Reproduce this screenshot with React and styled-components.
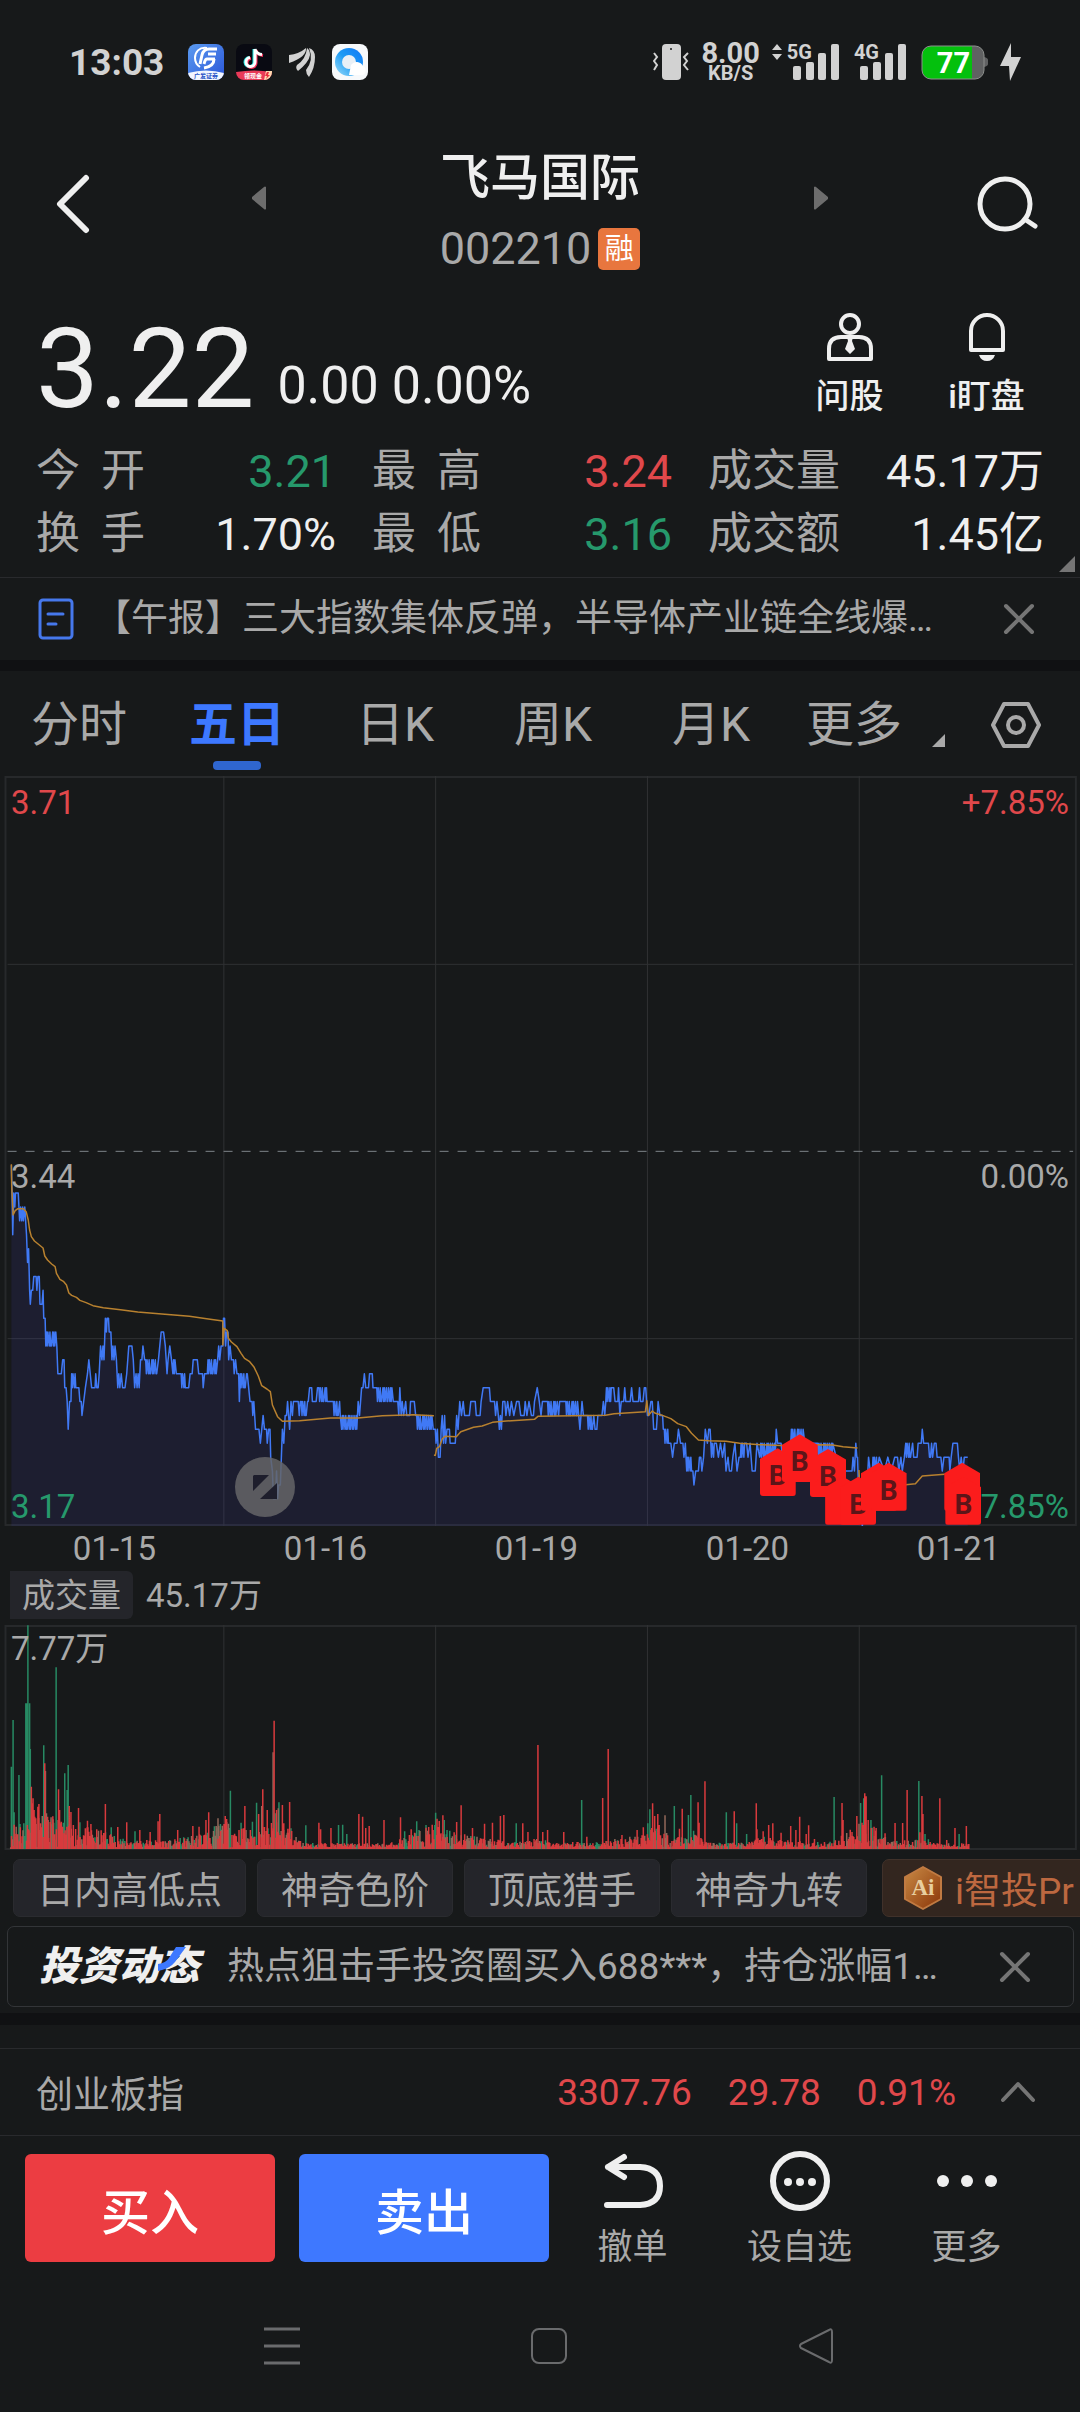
import { useState } from "react";
import styled, { createGlobalStyle, css } from "styled-components";

const RED = "#e0484b";
const GREEN = "#26996c";
const LIGHT = "#efefef";
const GRAY = "#a9a9a9";
const LINE = "#292a2d";

const stats = [
    { label: ["今", "开"], value: "3.21", color: GREEN },
    { label: ["最", "高"], value: "3.24", color: RED },
    { label: ["成", "交", "量"], value: "45.17万", color: LIGHT },
    { label: ["换", "手"], value: "1.70%", color: LIGHT },
    { label: ["最", "低"], value: "3.16", color: GREEN },
    { label: ["成", "交", "额"], value: "1.45亿", color: LIGHT },
];

const tabs = ["分时", "五日", "日K", "周K", "月K"];
const dates = ["01-15", "01-16", "01-19", "01-20", "01-21"];
const chips = ["日内高低点", "神奇色阶", "顶底猎手", "神奇九转"];

// [x, cents below 3.44], or [from, to, high, low] where the price flips between two levels
const priceLeft = [
    [33, 1], [35, 3], [37, 6], [40, 3], [43, 4], [45, 3], [53, 3], [57, 5], [60, 4], [63, 5], [66, 4], [68, 5], [72, 4], [77, 6], [80, 8], [83, 7],
    [86, 10], [88, 11], [91, 10], [95, 10], [98, 9], [105, 9], [107, 10], [110, 9], [114, 9], [116, 11], [122, 11], [125, 10], [127, 12], [131, 12],
    [133, 14], [135, 160, 13, 14], [162, 13], [165, 14], [168, 16], [178, 16], [182, 15], [186, 15], [188, 17], [192, 17], [195, 18], [198, 20],
    [202, 18], [206, 18], [208, 224, 16, 17], [229, 17], [232, 18], [236, 18], [238, 19], [243, 18], [248, 17], [254, 16], [258, 15], [262, 16],
    [266, 17], [276, 17], [278, 16], [281, 17], [285, 17], [288, 16], [292, 14], [296, 15], [299, 14], [302, 15], [306, 12], [309, 13], [311, 12],
    [315, 12], [317, 13], [322, 13], [325, 15], [328, 14], [331, 15], [334, 14], [338, 15], [342, 17], [345, 16], [348, 17], [352, 16], [356, 17],
    [363, 17], [368, 16], [374, 14], [383, 14], [387, 15], [391, 17], [395, 16], [398, 17], [401, 16], [404, 17], [408, 15], [412, 15], [415, 14],
    [420, 15], [423, 456, 15, 16], [460, 15], [464, 14], [468, 13], [475, 13], [480, 14], [485, 16], [488, 15], [493, 14], [498, 15], [502, 16],
    [504, 512, 15, 16], [514, 16], [524, 16], [526, 540, 16, 17], [548, 17], [552, 16], [558, 16], [561, 15], [573, 15], [577, 16], [588, 16],
    [590, 17], [594, 16], [602, 16], [604, 632, 15, 16], [635, 14], [638, 15], [642, 14], [647, 14], [649, 12], [652, 12], [655, 14], [658, 13],
    [662, 13], [664, 15], [668, 14], [672, 15], [678, 15], [680, 16], [684, 15], [688, 16], [693, 16], [695, 18], [698, 716, 16, 17], [718, 16],
    [722, 17], [726, 18], [732, 18], [734, 19], [737, 18], [742, 20], [752, 20], [756, 21], [760, 20], [764, 19], [768, 20], [774, 20], [776, 21],
    [780, 20], [784, 20], [786, 22], [791, 23], [794, 25], [800, 25], [803, 23], [806, 25], [809, 24], [814, 24], [817, 22], [820, 20], [824, 21],
    [828, 19], [832, 19], [835, 18], [838, 19], [841, 20], [845, 18], [849, 19], [852, 18], [866, 18], [869, 19], [872, 18], [875, 893, 18, 19],
    [895, 18], [899, 17], [905, 17], [907, 18], [918, 18], [922, 17], [926, 952, 17, 18], [955, 18], [966, 18], [968, 988, 18, 19], [992, 20],
    [994, 1036, 19, 20], [1040, 18], [1044, 19], [1050, 17], [1054, 17], [1058, 16], [1062, 17], [1070, 17], [1073, 16], [1081, 16], [1083, 17],
    [1092, 17], [1094, 1142, 17, 18], [1155, 18], [1158, 19], [1161, 17], [1165, 19], [1168, 18], [1172, 19], [1178, 18], [1181, 19], [1190, 19],
    [1192, 18], [1203, 18], [1207, 19], [1210, 1260, 19, 20], [1264, 20], [1266, 21], [1270, 20], [1273, 22], [1278, 22], [1281, 20], [1284, 19],
    [1288, 21], [1291, 19], [1294, 21], [1298, 20], [1305, 20], [1307, 21], [1322, 21], [1326, 19], [1330, 20], [1335, 18], [1340, 19], [1345, 18],
    [1349, 19], [1363, 19], [1367, 18], [1380, 18], [1383, 19], [1394, 19], [1397, 18], [1403, 17], [1421, 17], [1424, 18], [1436, 18], [1439, 19],
    [1443, 18], [1447, 19], [1450, 20], [1453, 19], [1456, 20], [1460, 18], [1466, 18], [1469, 19], [1474, 18], [1480, 19], [1485, 18], [1492, 19],
    [1500, 18], [1507, 18], [1512, 19], [1522, 19], [1525, 18], [1530, 19], [1536, 18], [1543, 19], [1549, 19], [1552, 18], [1560, 17], [1566, 18],
];

const priceRight = [
    [3, 19], [7, 18], [20, 18], [22, 50, 18, 19], [54, 19], [57, 18], [72, 18], [75, 112, 18, 19], [116, 20], [119, 19], [122, 18], [126, 19],
    [135, 19], [138, 152, 19, 20], [156, 19], [160, 20], [165, 20], [168, 19], [180, 19], [184, 18], [188, 19], [191, 18], [193, 205, 17, 18],
    [207, 17], [214, 17], [218, 18], [226, 18], [228, 17], [232, 19], [236, 18], [243, 18], [246, 17], [249, 18], [262, 18], [266, 17], [270, 18],
    [286, 18], [289, 17], [292, 18], [299, 18], [303, 17], [307, 17], [312, 19], [316, 19], [322, 18], [326, 18], [330, 20], [338, 20], [343, 18],
    [348, 19], [356, 19], [358, 20], [361, 378, 20, 21], [380, 21], [385, 22], [390, 21], [398, 21], [402, 20], [408, 21], [415, 21], [418, 22],
    [422, 21], [426, 23], [428, 440, 22, 23], [444, 23], [447, 24], [452, 23], [460, 23], [463, 22], [467, 22], [470, 23], [475, 22], [480, 20],
    [486, 21], [490, 20], [494, 20], [496, 506, 21, 22], [512, 21], [518, 22], [524, 21], [530, 22], [536, 21], [540, 23], [546, 22], [550, 23],
    [556, 23], [560, 22], [566, 21], [572, 23], [578, 22], [582, 22], [584, 594, 21, 22], [600, 21], [604, 22], [610, 21], [616, 23], [625, 23],
    [630, 21], [638, 22], [641, 684, 21, 22], [686, 20], [690, 21], [700, 21], [704, 22], [726, 22], [730, 766, 20, 21], [769, 21], [804, 21],
    [806, 850, 21, 22], [860, 22], [888, 23], [900, 23], [906, 23], [909, 22], [913, 23], [917, 21], [920, 22], [922, 22], [926, 25], [931, 25],
    [936, 27], [942, 24], [950, 24], [954, 22], [959, 23], [965, 23], [967, 980, 22, 23], [985, 22], [1000, 23], [1010, 22], [1020, 23],
    [1030, 22], [1038, 22], [1042, 23], [1048, 22], [1052, 23], [1058, 22], [1062, 1078, 21, 22], [1082, 21], [1085, 22], [1095, 22], [1098, 21],
    [1107, 21], [1110, 20], [1114, 21], [1128, 21], [1131, 22], [1134, 22], [1137, 21], [1140, 22], [1145, 21], [1150, 21], [1153, 22], [1164, 22],
    [1168, 23], [1173, 22], [1188, 22], [1190, 23], [1194, 22], [1199, 21], [1212, 21], [1215, 22], [1219, 23], [1223, 22], [1228, 23], [1232, 22], [1242, 22],
];

const averageLines = [
    "33,133 34,200 38,285 44,272 52,266 68,266 76,275 82,300 86,330 91,350 100,363 125,384 130,408 138,420 150,432 160,440 164,460 174,478 184,484 193,495 200,519 208,526 222,532 232,541 250,548 270,557 300,563 350,569 400,576 470,582 550,589 600,596 647,603 647,675 651,625 660,632 663,655 672,666 688,680 700,700 710,715 725,725 738,742 750,768 760,797 775,807 785,815 791,855 806,890 820,904 870,902 960,894 1040,894 1110,887 1200,884 1260,887",
    "1260,1006 1264,1006 1268,985 1276,980 1284,957 1292,949 1325,950 1338,935 1375,922 1400,918 1430,907 1470,903 1552,898 1562,889 1568,889 1758,886 1783,881 1874,875 1878,842 1883,886 1894,873 1903,880 1918,884 1948,896 1968,911 1993,920 2008,940 2028,960 2058,962 2108,964 2148,970 2208,974 2288,977 2374,974 2418,975 2448,980 2490,984",
    "2494,1050 2496,1085 2510,1110 2560,1100 2630,1094 2658,1091 2678,1068 2743,1063",
];

// volume spikes: x,y and g (down) / r (up) / m (both)
const spikesLeft = "33,740g 38,600g 41,877g 47,920m 55,765g 58,912g 75,550g 78,550g 81,316g 86,550g 88,687g 91,800r 93,850r 96,835r 99,870r 101,890r 104,895r 110,860r 113,852r 118,910r 127,676g 130,730r 132,753m 135,880m 140,900m 148,898m 154,898m 163,442g 170,808r 173,870r 178,905r 182,920r 188,760g 195,810g 198,735g 201,858r 206,876r 213,915r 228,864r 232,907g 254,902r 264,912r 306,852r 323,922g 342,921r 368,907r 392,934g 406,930r 436,936r 459,904r 464,882r 516,930r 560,918r 578,920r 598,900r 606,877r 633,895m 640,912g 654,888r 658,897r 669,812g 700,908g 711,858r 733,905g 745,848g 751,882r 763,808r 760,858m 776,870r 793,697m 796,602r 799,880g 803,870r 808,865m 810,847g 820,855r 824,910r 836,926r 841,846r 845,925g 888,916g 926,908r 931,928r 961,924r 983,915g 995,914g 1007,942g 1042,882r 1053,890r 1062,924r 1072,918r 1115,900r 1163,892r 1175,934g 1194,928r 1210,904g 1237,915g 1255,914r 1265,878g 1269,896r 1286,886r 1290,900g 1298,930g 1326,906r 1339,856r 1372,924r 1407,911r 1430,908r 1453,888r 1463,885r 1499,910g 1518,910r 1533,936r 1562,675r";
const spikesRight = "8,936r 22,930r 69,936r 121,840g 136,950r 182,834r 198,687r 238,945r 282,930r 300,922r 313,910g 319,868g 327,850r 333,888r 342,882r 346,915r 363,886m 390,858g 405,926r 413,866r 431,885g 438,825g 446,932g 459,847r 462,908r 479,784r 541,877g 564,874r 571,910g 600,942g 628,850r 630,928r 648,934r 664,915r 676,910r 700,938r 728,918r 743,930r 754,890r 773,942r 780,916r 797,957r 826,966r 854,831g 877,849r 880,900r 906,936r 920,888r 931,849g 935,908r 940,835g 943,820r 947,829r 953,900r 961,900g 970,920r 976,924r 992,766g 1002,940r 1031,909r 1053,909r 1066,810r 1100,783g 1103,937r 1109,828r 1112,882r 1118,942g 1161,835r 1181,960r 1205,924r 1217,942g 1238,918r";

// how high the quiet minutes reach: [x, height]
const envelope = [
    [30, 75], [110, 100], [150, 95], [200, 70], [260, 60], [310, 50], [360, 25], [500, 22], [600, 50], [650, 80], [740, 50], [800, 80], [850, 50],
    [880, 14], [1130, 12], [1200, 45], [1280, 85], [1330, 45], [1430, 28], [1480, 14], [1568, 28], [1600, 14], [1730, 18], [1800, 28], [1860, 48],
    [1900, 70], [1930, 50], [1980, 35], [2030, 48], [2050, 16], [2160, 14], [2220, 34], [2290, 22], [2400, 14], [2450, 38], [2500, 95], [2540, 60],
    [2580, 22], [2650, 24], [2700, 24], [2760, 12], [2814, 12],
];

const markers = [
    { x: 638, y: 985 }, { x: 784, y: 987 }, { x: 702, y: 943 }, { x: 828, y: 1070, blank: true }, { x: 872, y: 1070 },
    { x: 932, y: 1028, blank: true }, { x: 960, y: 1028 }, { x: 1174, y: 1028, blank: true }, { x: 1177, y: 1070 },
];

const VIEW_WIDTH = 3136;
const HALF = 1568;
const BASE = 1218;
const dayLines = [650, 1265, 1880, 2495];

function levelToY(level) {
    return 94 + level * 41.7;
}

function expand(series, offset) {
    const points = [];
    series.forEach(item => {
        if (item.length === 2) {
            points.push([item[0] + offset, levelToY(item[1])]);
            return;
        }
        const [from, to, high, low] = item;
        let up = true;
        let step = 0;
        for (let x = from; x <= to; x += step % 4 === 3 ? 4 : 2) {
            points.push([x + offset, levelToY(up ? high : low)]);
            if (step % 7 !== 5) up = !up;
            step++;
        }
    });
    return points;
}

function parseSpikes(text, offset) {
    return text.split(" ").map(item => {
        const [x, y] = item.slice(0, -1).split(",").map(Number);
        return { x: x + offset, top: y, kind: item.slice(-1) };
    });
}

function quietBars() {
    const bars = [];
    let seed = 11;
    for (let x = 31; x < 2815; x += 2.55) {
        seed = (seed * 16807) % 2147483647;
        const random = seed / 2147483647;
        const next = Math.max(1, envelope.findIndex(point => point[0] > x));
        const [x0, h0] = envelope[next - 1];
        const [x1, h1] = envelope[next];
        const height = h0 + ((h1 - h0) * (x - x0)) / (x1 - x0);
        const kind = seed % 10 < 6 ? "r" : seed % 10 < 8 ? "m" : "g";
        bars.push({ x, top: 987 - 5 - height * random, kind });
    }
    return bars;
}

const pricePoints = [...expand(priceLeft, 0), ...expand(priceRight, HALF)];
const priceLine = pricePoints.map(point => point.join(",")).join(" ");
const priceArea = `33,${BASE} ${priceLine} 2810,${BASE}`;
const volumeBars = [...quietBars(), ...parseSpikes(spikesLeft, 0), ...parseSpikes(spikesRight, HALF)];

function barsPath(kind) {
    return volumeBars.filter(bar => bar.kind === kind).map(bar => `M${bar.x.toFixed(1)} 987V${bar.top.toFixed(0)}`).join("");
}

function CloseIcon() {
    return (
        <svg width="32" height="32" viewBox="0 0 32 32" fill="none" stroke="#757575" strokeWidth="4" strokeLinecap="round">
            <path d="M3 3L29 29M29 3L3 29" />
        </svg>
    );
}

function SignalIcon() {
    return (
        <svg width="46" height="36" viewBox="0 0 46 36" fill="#d2d2d2">
            <rect x="0" y="22" width="8" height="14" rx="2" />
            <rect x="13" y="18" width="8" height="18" rx="2" />
            <rect x="25" y="9" width="8" height="27" rx="2" />
            <rect x="38" y="0" width="8" height="36" rx="2" />
        </svg>
    );
}

function StatusBar() {
    return (
        <Status>
            <StatusGroup>
                <Clock>13:03</Clock>
                <svg width="36" height="36" viewBox="0 0 36 36">
                    <defs>
                        <linearGradient id="gf" x1="0" y1="0" x2="1" y2="1">
                            <stop offset="0" stopColor="#5b9bf0" />
                            <stop offset="1" stopColor="#2a55d8" />
                        </linearGradient>
                        <clipPath id="tile"><rect width="36" height="36" rx="8" /></clipPath>
                    </defs>
                    <g clipPath="url(#tile)">
                        <rect width="36" height="36" fill="url(#gf)" />
                        <path d="M19 4C11 3 7 8 7 14c0 4 2 7 5 9" fill="none" stroke="#fff" strokeWidth="2" />
                        <path d="M29 5H21c-4 0-6 2-7 6l-2 9M28 10H20M27 15H19c-2 0-2 2-3 5M26 15c0 5-4 8-10 9" fill="none" stroke="#fff" strokeWidth="3" />
                        <path d="M0 29Q18 24 36 29V36H0z" fill="#f3f6ff" />
                        <text x="18" y="34" textAnchor="middle" fontSize="6" fontWeight="700" fill="#2b55c8">广发证券</text>
                    </g>
                </svg>
                <svg width="36" height="36" viewBox="0 0 36 36">
                    <g clipPath="url(#tile)">
                        <rect width="36" height="36" fill="#090a12" />
                        <g fill="none" strokeWidth="3">
                            <path d="M18 5V18a4.500 4.500 0 1 1-5-4.500M18 5c1 4 3 5 7 5.500" stroke="#25e8e4" />
                            <path d="M20 6V19a4.500 4.500 0 1 1-5-4.500M20 6c1 4 3 5 7 5.500" stroke="#f5305a" />
                            <path d="M19 5V18a4.500 4.500 0 1 1-5-4.500M19 5c1 4 3 5 7 5.500" stroke="#fff" />
                        </g>
                        <path d="M0 28Q18 25 36 28V36H0z" fill="#e83a58" />
                        <path d="M30 27h6v9h-8z" fill="#ffd9b0" />
                        <path d="M31 28l-2 4h2l-1 3 4-4h-2l1-3z" fill="#e8303f" />
                        <text x="17" y="34" textAnchor="middle" fontSize="6" fontWeight="700" fill="#fff">领现金</text>
                    </g>
                </svg>
                <svg width="36" height="36" viewBox="0 0 36 36" fill="#d2d2d2">
                    <path d="M5 11Q15 10 22 4Q23 13 5 19z" />
                    <path d="M23 4Q26 6 26 11Q25 18 14 27Q11 24 13 21Q22 15 23 4z" />
                    <path d="M25 4Q31 6 31 13Q31 24 25 33Q22 30 22 26Q30 16 25 4z" />
                </svg>
                <svg width="36" height="36" viewBox="0 0 36 36">
                    <defs>
                        <linearGradient id="qb" x1="0" y1="1" x2="1" y2="0">
                            <stop offset="0" stopColor="#9adcf8" />
                            <stop offset="0.500" stopColor="#1c9bf5" />
                            <stop offset="1" stopColor="#1277f5" />
                        </linearGradient>
                    </defs>
                    <rect width="36" height="36" rx="8" fill="#f7f9fb" />
                    <circle cx="17" cy="18" r="14" fill="url(#qb)" />
                    <circle cx="17" cy="18" r="7" fill="#e9f0f6" />
                    <path d="M17 31h14a5 5 0 0 0 0-9 7 7 0 0 0-12-1z" fill="#fff" />
                </svg>
            </StatusGroup>
            <StatusGroup>
                <svg width="36" height="36" viewBox="0 0 36 36">
                    <rect x="9" width="19" height="36" rx="4" fill="#d2d2d2" />
                    <circle cx="18" cy="5" r="1" fill="#17191a" />
                    <path d="M1 9l3 4-3 4 3 4-3 5M35 9l-4 4 3 4-3 4 4 5" fill="none" stroke="#d2d2d2" strokeWidth="2" />
                </svg>
                <Speed>
                    <b>8.00</b>
                    <small>KB/S</small>
                </Speed>
                <Network>
                    <svg width="10" height="16" viewBox="0 0 10 16" fill="#d2d2d2">
                        <path d="M5 0l5 6H0zM5 16l5-6H0z" />
                    </svg>
                    <NetworkName>5G</NetworkName>
                    <SignalIcon />
                </Network>
                <Network>
                    <NetworkName>4G</NetworkName>
                    <SignalIcon />
                </Network>
                <Battery>
                    <svg width="67" height="36" viewBox="0 0 67 36">
                        <rect x="1" y="2" width="62" height="33" rx="9" fill="#606162" />
                        <path d="M63 13q4 1 4 3v4q0 2-4 3z" fill="#606162" />
                        <path d="M10 2H51V35H10a9 9 0 0 1-9-9V11a9 9 0 0 1 9-9z" fill="#04c00d" />
                        <rect x="1" y="2" width="62" height="33" rx="9" fill="none" stroke="#8d908d" strokeWidth="1" />
                    </svg>
                    <span>77</span>
                </Battery>
                <svg width="21" height="38" viewBox="0 0 21 38" fill="#d2d2d2">
                    <path d="M11 0L0 23H9L10 38 21 14H11z" />
                </svg>
            </StatusGroup>
        </Status>
    );
}

function PriceChart() {
    return (
        <ChartBox>
            <svg width="100%" height="750" viewBox={`0 -1032 ${VIEW_WIDTH} 2250`} preserveAspectRatio="none">
                <Grid d="M16 -1029H3124V1215H16z" $frame />
                <Grid d={dayLines.map(x => `M${x} -1032V${BASE}`).join("")} />
                <Grid d="M22 -467H3116M22 656H3116" />
                <Dashed d="M22 94H3116" />
                <Area points={priceArea} />
                <PriceLine points={priceLine} />
                {averageLines.map(points => <AverageLine key={points} points={points} />)}
            </svg>
            <AxisLabel $top={9} $color={RED}>3.71</AxisLabel>
            <AxisLabel $top={9} $color={RED} $right>+7.85%</AxisLabel>
            <AxisLabel $top={383} $color={GRAY}>3.44</AxisLabel>
            <AxisLabel $top={383} $color={GRAY} $right>0.00%</AxisLabel>
            <AxisLabel $top={713} $color={GREEN}>3.17</AxisLabel>
            <AxisLabel $top={713} $color={GREEN} $right>-7.85%</AxisLabel>
            {markers.map(marker => (
                <Marker
                    key={`${marker.x}-${marker.y}`}
                    style={{ left: `${((marker.x + HALF) / VIEW_WIDTH) * 100}%`, top: `${((marker.y + 1032) / 2250) * 100}%` }}
                >
                    {!marker.blank && "B"}
                </Marker>
            ))}
            <ExpandButton aria-label="全屏">
                <svg width="26" height="26" viewBox="0 0 26 26" fill="#1e1e2c">
                    <path d="M2 1H17L1 17V2zM25 9V25H8z" />
                </svg>
            </ExpandButton>
        </ChartBox>
    );
}

function VolumeChart() {
    return (
        <ChartBox>
            <svg width="100%" height="225" viewBox={`0 315 ${VIEW_WIDTH} 675`} preserveAspectRatio="none">
                <Grid d="M16 318H3124V987H16z" $frame />
                <Grid d={dayLines.map(x => `M${x} 315V987`).join("")} />
                <Bars d={barsPath("g")} stroke="#278a63" />
                <Bars d={barsPath("m")} stroke="#92685a" />
                <Bars d={barsPath("r")} stroke="#d83a3d" />
            </svg>
            <AxisLabel $top={6} $color={GRAY}>7.77万</AxisLabel>
        </ChartBox>
    );
}

export default function App() {
    const [activeTab, setActiveTab] = useState("五日");

    return (
        <Page>
            <GlobalStyle />
            <StatusBar />

            <Header>
                <IconButton aria-label="返回">
                    <svg width="34" height="60" viewBox="0 0 34 60" fill="none" stroke={LIGHT} strokeWidth="6" strokeLinecap="round" strokeLinejoin="round">
                        <path d="M30 4L4 30 30 56" />
                    </svg>
                </IconButton>
                <Switcher>
                    <StepButton aria-label="上一只">
                        <svg width="14" height="24" viewBox="0 0 14 24" fill="#6d6d6d"><path d="M14 1V23Q13 24 12 23L0 13V11L12 1Q13 0 14 1z" /></svg>
                    </StepButton>
                    <Title>
                        <Name>飞马国际</Name>
                        <Code>002210<Badge>融</Badge></Code>
                    </Title>
                    <StepButton aria-label="下一只">
                        <svg width="14" height="24" viewBox="0 0 14 24" fill="#6d6d6d"><path d="M0 1V23Q1 24 2 23L14 13V11L2 1Q1 0 0 1z" /></svg>
                    </StepButton>
                </Switcher>
                <IconButton aria-label="搜索">
                    <svg width="62" height="56" viewBox="0 0 62 56" fill="none" stroke={LIGHT} strokeWidth="5" strokeLinecap="round">
                        <circle cx="28" cy="28" r="25" />
                        <path d="M49 44L58 50" />
                    </svg>
                </IconButton>
            </Header>

            <Quote>
                <Price>3.22</Price>
                <Change>0.00 0.00%</Change>
                <Tools>
                    <Tool>
                        <svg width="48" height="48" viewBox="0 0 48 48" fill="none" stroke={LIGHT} strokeWidth="4">
                            <circle cx="24" cy="11" r="9" />
                            <path d="M3 46V36Q3 24 15 24H33Q45 24 45 36V46z" strokeLinejoin="round" />
                            <path d="M21 24H27L26 28 29 36 24 41 19 36 22 28z" fill={LIGHT} stroke="none" />
                        </svg>
                        问股
                    </Tool>
                    <Tool>
                        <svg width="48" height="48" viewBox="0 0 48 48" fill="none" stroke={LIGHT} strokeWidth="4">
                            <path d="M8 37V18a16 16 0 0 1 32 0V37z" strokeLinejoin="round" />
                            <path d="M16 42H32Q30 48 24 48T16 42z" fill={LIGHT} stroke="none" />
                        </svg>
                        i盯盘
                    </Tool>
                </Tools>
            </Quote>

            <Stats>
                {stats.map(stat => (
                    <Stat key={stat.label.join("")}>
                        <StatLabel $spread={stat.label.length === 2}>
                            {stat.label.map(char => <span key={char}>{char}</span>)}
                        </StatLabel>
                        <StatValue $color={stat.color}>{stat.value}</StatValue>
                    </Stat>
                ))}
                <Corner width="16" height="16" viewBox="0 0 16 16" fill="#757575"><path d="M16 0V16H0z" /></Corner>
            </Stats>

            <News>
                <svg width="36" height="42" viewBox="0 0 36 42" fill="none" stroke="#4678ec" strokeWidth="3" strokeLinecap="round">
                    <rect x="2" y="2" width="32" height="38" rx="3" />
                    <path d="M10 16H25M10 26H18" />
                </svg>
                <NewsText href="#news">【午报】三大指数集体反弹，半导体产业链全线爆…</NewsText>
                <CloseButton aria-label="关闭"><CloseIcon /></CloseButton>
            </News>
            <Band $height={11} />

            <Tabs>
                {tabs.map(tab => (
                    <Tab key={tab} $active={tab === activeTab} onClick={() => setActiveTab(tab)}>{tab}</Tab>
                ))}
                <MoreTab>
                    更多
                    <svg width="13" height="13" viewBox="0 0 13 13" fill={GRAY}><path d="M13 0V13H0z" /></svg>
                </MoreTab>
                <SettingsButton aria-label="设置">
                    <svg width="52" height="48" viewBox="0 0 52 48" fill="none" stroke={GRAY} strokeWidth="4" strokeLinejoin="round">
                        <path d="M14 3H38L49 24 38 45H14L3 24z" />
                        <circle cx="26" cy="24" r="8" />
                    </svg>
                </SettingsButton>
            </Tabs>

            <PriceChart />
            <Dates>
                {dates.map(date => <span key={date}>{date}</span>)}
            </Dates>

            <VolumeHead>
                <VolumeTag>成交量</VolumeTag>
                <VolumeTotal>45.17万</VolumeTotal>
            </VolumeHead>
            <VolumeChart />

            <Chips>
                {chips.map(chip => <Chip key={chip}>{chip}</Chip>)}
                <ProChip>
                    <svg width="38" height="44" viewBox="0 0 38 44">
                        <defs>
                            <linearGradient id="ai" x1="0" y1="0" x2="1" y2="1">
                                <stop offset="0" stopColor="#c98a45" />
                                <stop offset="1" stopColor="#8a3508" />
                            </linearGradient>
                        </defs>
                        <path d="M19 1L37 11V33L19 43 1 33V11z" fill="url(#ai)" stroke="#c07a42" strokeWidth="2" strokeLinejoin="round" />
                        <text x="19" y="29" textAnchor="middle" fontFamily="Liberation Serif, serif" fontWeight="700" fontSize="23" fill="#e8cf9f">Ai</text>
                    </svg>
                    i智投Pr
                </ProChip>
            </Chips>

            <Feed>
                <FeedLogo>
                    投资动态
                    <svg width="30" height="26" viewBox="0 0 30 26" fill="#3d78ff"><path d="M19 1H29L18 16Q13 22 5 24L1 25V18Q9 17 12 12z" /></svg>
                </FeedLogo>
                <NewsText href="#feed">热点狙击手投资圈买入688***，持仓涨幅1…</NewsText>
                <CloseButton aria-label="关闭"><CloseIcon /></CloseButton>
            </Feed>
            <Band $height={12} />

            <IndexBar>
                <IndexName>创业板指</IndexName>
                <span>3307.76</span>
                <span>29.78</span>
                <span>0.91%</span>
                <IndexToggle aria-label="展开">
                    <svg width="36" height="22" viewBox="0 0 36 22" fill="none" stroke="#757575" strokeWidth="4" strokeLinecap="round" strokeLinejoin="round">
                        <path d="M3 19L18 3 33 19" />
                    </svg>
                </IndexToggle>
            </IndexBar>

            <Actions>
                <TradeButton $color="#ec3d42">买入</TradeButton>
                <TradeButton $color="#3e78ff">卖出</TradeButton>
                <ActionList>
                    <Action>
                        <svg width="62" height="62" viewBox="0 0 62 62" fill="none" stroke={LIGHT} strokeWidth="6" strokeLinecap="round" strokeLinejoin="round">
                            <path d="M22 7L6 17 22 27M6 17H38Q58 18 58 36T38 55H5" />
                        </svg>
                        撤单
                    </Action>
                    <Action>
                        <svg width="62" height="62" viewBox="0 0 62 62" fill={LIGHT}>
                            <circle cx="31" cy="31" r="27" fill="none" stroke={LIGHT} strokeWidth="6" />
                            <circle cx="19" cy="32" r="4" />
                            <circle cx="31" cy="32" r="4" />
                            <circle cx="43" cy="32" r="4" />
                        </svg>
                        设自选
                    </Action>
                    <Action>
                        <svg width="62" height="62" viewBox="0 0 62 62" fill={LIGHT}>
                            <circle cx="7" cy="31" r="6" />
                            <circle cx="31" cy="31" r="6" />
                            <circle cx="55" cy="31" r="6" />
                        </svg>
                        更多
                    </Action>
                </ActionList>
            </Actions>

            <SystemNav>
                <SystemButton aria-label="任务">
                    <svg width="36" height="38" viewBox="0 0 36 38" stroke="#6a6b6d" strokeWidth="3"><path d="M0 2H36M0 19H36M0 36H36" /></svg>
                </SystemButton>
                <SystemButton aria-label="主页">
                    <svg width="36" height="38" viewBox="0 0 36 38" fill="none" stroke="#6a6b6d" strokeWidth="2"><rect x="1" y="2" width="34" height="34" rx="7" /></svg>
                </SystemButton>
                <SystemButton aria-label="后退">
                    <svg width="36" height="38" viewBox="0 0 36 38" fill="none" stroke="#6a6b6d" strokeWidth="2" strokeLinejoin="round"><path d="M31 3Q34 1 34 5V33Q34 37 31 35L3 21Q1 19 3 17z" /></svg>
                </SystemButton>
            </SystemNav>
        </Page>
    );
}

const GlobalStyle = createGlobalStyle`
    * {
        box-sizing: border-box;
    }

    body {
        margin: 0;
        background-color: #17191a;
        font-family: Roboto, "Noto Sans CJK SC", sans-serif;
        color: ${GRAY};
    }

    button {
        padding: 0;
        border: none;
        background: none;
        color: inherit;
        font-family: inherit;
        font-size: inherit;
        cursor: pointer;
    }

    svg {
        display: block;
        flex-shrink: 0;
    }
`;

const Page = styled.main`
    overflow: hidden;
`;

const Status = styled.div`
    height: 124px;
    padding: 0 59px 0 69px;

    display: flex;
    justify-content: space-between;
    align-items: center;

    color: #d2d2d2;
`;

const StatusGroup = styled.div`
    display: flex;
    align-items: center;
    gap: 12px;
`;

const Clock = styled.span`
    margin-right: 12px;

    font-size: 37px;
    font-weight: 700;
`;

const Speed = styled.div`
    display: flex;
    flex-direction: column;
    align-items: center;

    b {
        font-size: 29px;
        line-height: 22px;
    }

    small {
        font-size: 20px;
        font-weight: 700;
        line-height: 18px;
    }
`;

const Network = styled.div`
    margin-right: 3px;

    display: flex;
    align-items: flex-start;

    > svg:first-child {
        margin-right: 5px;
    }

    > svg:last-child {
        margin-left: -19px;
    }
`;

const NetworkName = styled.span`
    font-size: 20px;
    font-weight: 700;
    line-height: 17px;
`;

const Battery = styled.div`
    position: relative;

    span {
        position: absolute;
        inset: 2px 2px 0 0;

        font-size: 29px;
        font-weight: 700;
        line-height: 34px;
        text-align: center;
        color: #ffffff;
    }
`;

const Header = styled.header`
    padding: 20px 41px 0 56px;

    display: flex;
    align-items: flex-start;
`;

const IconButton = styled.button`
    width: 62px;
    height: 120px;
`;

const Switcher = styled.div`
    flex: 1;
    padding: 0 144px 0 129px;

    display: flex;
    align-items: flex-start;
    justify-content: space-between;
`;

const StepButton = styled.button`
    width: 24px;
    height: 108px;

    svg {
        margin: 0 auto;
    }
`;

const Title = styled.div`
    text-align: center;
`;

const Name = styled.h1`
    margin: 0;

    font-size: 50px;
    font-weight: 500;
    line-height: 68px;
    color: ${LIGHT};
`;

const Code = styled.div`
    display: flex;
    align-items: center;
    justify-content: center;
    gap: 7px;

    font-size: 45px;
    line-height: 74px;
`;

const Badge = styled.span`
    width: 42px;
    height: 42px;
    border-radius: 5px;
    background-color: #e8763e;

    font-size: 29px;
    line-height: 42px;
    text-align: center;
    color: #ffffff;
`;

const Quote = styled.section`
    padding: 27px 25px 0 36px;

    display: flex;
    align-items: flex-end;

    color: ${LIGHT};
`;

const Price = styled.strong`
    font-size: 112px;
    font-weight: 400;
    line-height: 112px;
`;

const Change = styled.span`
    margin-left: 23px;
    padding-bottom: 9px;

    font-size: 52px;
    line-height: 60px;
`;

const Tools = styled.div`
    margin-left: auto;
    align-self: flex-start;

    display: flex;
`;

const Tool = styled.button`
    width: 137px;

    display: flex;
    flex-direction: column;
    align-items: center;
    gap: 13px;

    font-size: 34px;
    font-weight: 500;
    line-height: 44px;
`;

const Stats = styled.dl`
    margin: 0;
    padding: 15px 36px 11px;
    border-bottom: 1px solid ${LINE};
    position: relative;

    display: grid;
    grid-template-columns: 300fr 300fr 336fr;
    column-gap: 36px;
`;

const Stat = styled.div`
    display: flex;
    justify-content: space-between;

    font-size: 45px;
    line-height: 63px;
`;

const StatLabel = styled.dt`
    display: flex;
    gap: ${props => props.$spread ? '21px' : '0'};

    font-size: 44px;
`;

const StatValue = styled.dd`
    margin: 0;

    color: ${props => props.$color};
`;

const Corner = styled.svg`
    position: absolute;
    right: 5px;
    bottom: 5px;
`;

const News = styled.section`
    height: 82px;
    padding: 0 45px 0 38px;

    display: flex;
    align-items: center;
`;

const NewsText = styled.a`
    flex: 1;
    margin-left: 20px;
    overflow: hidden;

    font-size: 37px;
    line-height: 50px;
    white-space: nowrap;
    text-decoration: none;
    color: inherit;
`;

const CloseButton = styled.button`
    margin-left: 20px;
`;

const Band = styled.div`
    height: ${props => props.$height}px;
    background-color: #101113;
`;

const Tabs = styled.nav`
    height: 105px;
    padding: 18px 38px 0 0;

    display: flex;
    align-items: flex-start;

    font-size: 48px;
    line-height: 72px;
`;

const Tab = styled.button`
    flex: 0 0 158px;

    line-height: 72px;
    white-space: nowrap;

    ${props => props.$active && css`
        font-weight: 700;
        color: #3d78ff;

        &::after {
            content: "";
            display: block;
            width: 48px;
            height: 9px;
            margin: 0 auto;
            border-radius: 4px;
            background-color: #2f66cf;
        }
    `}
`;

const MoreTab = styled.button`
    margin-left: 16px;

    display: flex;
    align-items: flex-end;
    gap: 30px;

    line-height: 72px;

    svg {
        margin-bottom: 14px;
    }
`;

const SettingsButton = styled.button`
    height: 72px;
    margin-left: auto;
`;

const ChartBox = styled.section`
    position: relative;
`;

const Grid = styled.path`
    fill: none;
    stroke: ${props => props.$frame ? '#27292b' : '#303133'};
    stroke-width: ${props => props.$frame ? 2 : 1};
    vector-effect: non-scaling-stroke;
`;

const Dashed = styled(Grid)`
    stroke: #7d8489;
    stroke-dasharray: 9 9;
`;

const Area = styled.polygon`
    fill: rgba(66, 72, 200, 0.13);
`;

const PriceLine = styled.polyline`
    fill: none;
    stroke: #4079f5;
    stroke-width: 1.5;
    stroke-linejoin: round;
    vector-effect: non-scaling-stroke;
`;

const AverageLine = styled(PriceLine)`
    stroke: #b8812f;
`;

const Bars = styled.path`
    fill: none;
    stroke-width: 1.5;
    vector-effect: non-scaling-stroke;
`;

const AxisLabel = styled.span`
    position: absolute;
    top: ${props => props.$top}px;
    ${props => props.$right ? 'right: 11px;' : 'left: 11px;'}

    font-size: 33px;
    line-height: 36px;
    color: ${props => props.$color};
`;

const Marker = styled.span`
    position: absolute;
    width: 36px;
    height: 48px;
    padding-top: 8px;
    border-radius: 3px;
    background-color: #fb1c1c;
    clip-path: polygon(50% 0, 100% 22%, 100% 100%, 0 100%, 0 22%);

    font-size: 28px;
    font-weight: 700;
    line-height: 40px;
    text-align: center;
    color: #5c1519;
`;

const ExpandButton = styled.button`
    position: absolute;
    left: 235px;
    bottom: 9px;
    width: 60px;
    height: 60px;
    border-radius: 50%;
    background-color: rgba(101, 101, 103, 0.85);

    display: flex;
    align-items: center;
    justify-content: center;
`;

const Dates = styled.div`
    padding: 0 16px 0 9px;

    display: grid;
    grid-template-columns: repeat(5, 1fr);

    font-size: 33px;
    line-height: 45px;
    text-align: center;
`;

const VolumeHead = styled.div`
    height: 54px;
    padding: 0 10px 6px;

    display: flex;
    align-items: center;
    gap: 13px;

    font-size: 33px;
`;

const VolumeTag = styled.button`
    padding: 2px 12px 0;
    border-radius: 0 6px 6px 0;
    background-color: #24252a;

    line-height: 46px;
`;

const VolumeTotal = styled.span`
    padding-top: 2px;

    line-height: 46px;
`;

const Chips = styled.div`
    padding: 9px 0 9px 13px;

    display: flex;
    gap: 11px;
    overflow: hidden;
`;

const Chip = styled.button`
    flex-shrink: 0;
    height: 58px;
    padding: 0 23px;
    border: 1px solid #2a2b2f;
    border-radius: 7px;
    background-color: #24252a;

    display: flex;
    align-items: center;

    font-size: 37px;
    white-space: nowrap;
`;

const ProChip = styled(Chip)`
    margin-left: 4px;
    padding: 0 23px 0 21px;
    border-color: #40312a;
    background-color: #33261f;
    gap: 13px;

    color: #bd6840;
`;

const Feed = styled.section`
    height: 81px;
    margin: 0 6px 6px 7px;
    padding: 0 42px 0 31px;
    border: 1px solid #333538;
    border-radius: 7px;

    display: flex;
    align-items: center;
`;

const FeedLogo = styled.strong`
    position: relative;
    margin-right: 8px;

    font-size: 40px;
    font-weight: 900;
    font-style: italic;
    line-height: 50px;
    color: ${LIGHT};

    svg {
        position: absolute;
        right: 12px;
        top: 4px;
    }
`;

const IndexBar = styled.section`
    height: 88px;
    margin-top: 23px;
    padding: 0 44px 0 36px;
    border-top: 1px solid ${LINE};
    border-bottom: 1px solid ${LINE};

    display: flex;
    align-items: center;
    gap: 36px;

    font-size: 37px;
    color: ${RED};
`;

const IndexName = styled.span`
    margin-right: auto;

    color: ${GRAY};
`;

const IndexToggle = styled.button`
    margin-left: 8px;
`;

const Actions = styled.section`
    padding: 18px 30px 0 25px;

    display: flex;
    gap: 24px;
`;

const TradeButton = styled.button`
    flex: 250 1 0;
    height: 108px;
    border-radius: 6px;
    background-color: ${props => props.$color};

    font-size: 49px;
    font-weight: 500;
    color: #ffffff;
`;

const ActionList = styled.div`
    flex: 501 1 0;
    margin-left: -24px;

    display: grid;
    grid-template-columns: repeat(3, 1fr);
`;

const Action = styled.button`
    margin-top: -4px;

    display: flex;
    flex-direction: column;
    align-items: center;
    gap: 14px;

    font-size: 35px;
    line-height: 44px;
`;

const SystemNav = styled.nav`
    padding: 57px 131px 44px 148px;

    display: grid;
    grid-template-columns: repeat(3, 1fr);
`;

const SystemButton = styled.button`
    display: flex;
    justify-content: center;
`;
